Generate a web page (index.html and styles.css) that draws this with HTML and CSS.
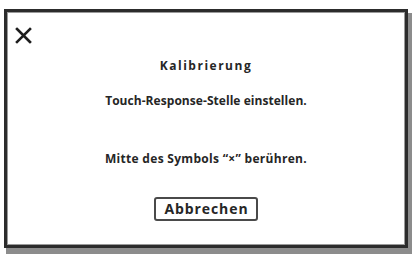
FILE: index.html
```html
<!DOCTYPE html>
<html lang="de">
<head>
<meta charset="utf-8">
<link rel="stylesheet" href="styles.css">
</head>
<body>
<div class="dialog">
  <div class="close">
    <svg width="17" height="17" viewBox="0 0 17 17"><path d="M2 2 L15 15 M15 2 L2 15" stroke="#1e1e1e" stroke-width="2.6" stroke-linecap="square" fill="none"/></svg>
  </div>
  <div class="title">Kalibrierung</div>
  <div class="line line-1">Touch-Response-Stelle einstellen.</div>
  <div class="line line-2">Mitte des Symbols “×” berühren.</div>
  <div class="actions"><button class="btn">Abbrechen</button></div>
</div>
</body>
</html>
```
FILE: styles.css
```css
html, body {
  margin: 0;
  padding: 0;
  background: #ffffff;
}
body {
  width: 412px;
  height: 254px;
  overflow: hidden;
  font-family: "Open Sans", "Noto Sans", sans-serif;
  color: #262626;
}
.dialog {
  box-sizing: border-box;
  width: 404px;
  height: 239px;
  margin: 9px 0 0 4px;
  border: 3px solid #2c2c2c;
  box-shadow: inset 0 0 0 1px #9a9a9a, 3px 5px 0 1px #8c8c8c;
  background: #fff;
  display: flex;
  flex-direction: column;
}
.close {
  margin: 15px 0 0 8px;
  width: 17px;
  height: 17px;
}
.close svg { display: block; }
.title, .line {
  font-weight: 700;
  line-height: 14px;
  text-align: center;
}
.title {
  font-size: 12px;
  margin-top: 15px;
  letter-spacing: 1.5px;
}
.line { font-size: 12px; }
.line-1 { margin-top: 21px; letter-spacing: 0.05px; }
.line-2 { margin-top: 44px; letter-spacing: 0.3px; }
.actions {
  margin-top: 31px;
  display: flex;
  justify-content: center;
}
.btn {
  box-sizing: border-box;
  width: 104px;
  height: 24px;
  padding: 0 0 0 1px;
  border: 2px solid #4a4a4a;
  border-radius: 3px;
  background: #fff;
  font-family: "Open Sans", "Noto Sans", sans-serif;
  font-size: 14px;
  font-weight: 700;
  letter-spacing: 0.9px;
  line-height: 20px;
  color: #262626;
}
```
